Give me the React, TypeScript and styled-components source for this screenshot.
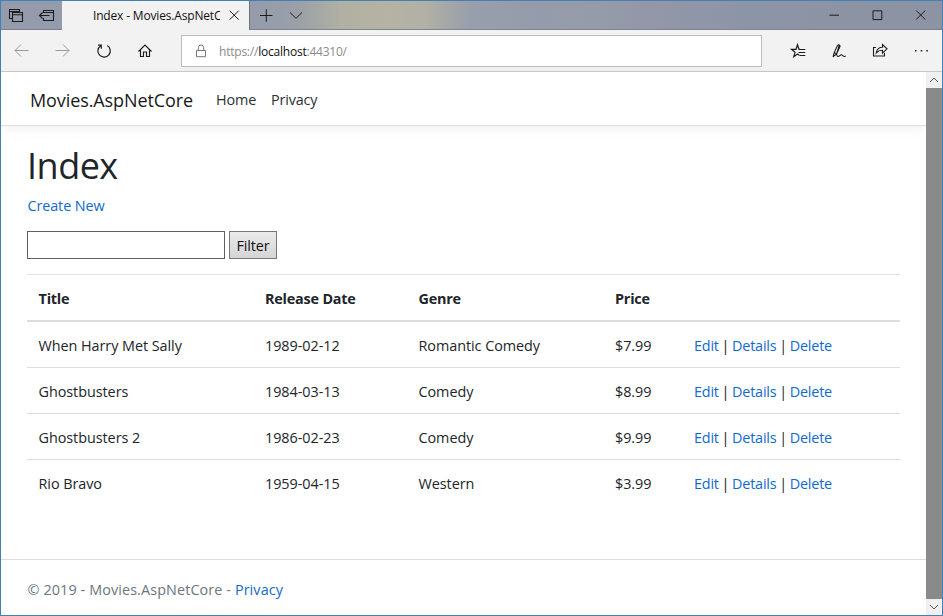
import React from "react";
import styled, { createGlobalStyle } from "styled-components";

const Global = createGlobalStyle`
  * { box-sizing: border-box; }
  html, body { margin: 0; padding: 0; }
  body { font-family: "Open Sans", "Noto Sans", sans-serif; overflow: hidden; }
`;

const Window = styled.div`
  width: 943px;
  height: 616px;
  border: 1px solid #4480b6;
  display: flex;
  flex-direction: column;
  background: #fff;
  overflow: hidden;
`;

const TitleBar = styled.header`
  display: flex;
  height: 29px;
  flex: none;
  background: linear-gradient(90deg, #949bab 0, #949bab 250px, #9a9fa8 295px, #b0b0a3 340px, #b5b4a3 385px, #b0b0a5 425px, #989eab 470px, #959baa 540px, #959ca9 590px, #9497a8 640px, #8c95a6 740px, #8c93a2 100%);
`;

const TitleCell = styled.div<{ $w: number }>`
  width: ${(p) => p.$w}px;
  flex: none;
  border-bottom: 1px solid #7b8190;
`;

const Spacer = styled.div`
  flex: 1;
  border-bottom: 1px solid #7f8491;
`;

const Tab = styled.div`
  width: 188px;
  flex: none;
  display: flex;
  background: #f2f2f2;
  border-right: 1px solid #6f7480;
`;

const TabTitle = styled.div`
  width: 127px;
  margin-left: 31px;
  overflow: hidden;
  white-space: nowrap;
  font-size: 12px;
  line-height: 29px;
  letter-spacing: -0.17px;
  color: #111;
`;

const Toolbar = styled.nav`
  height: 42px;
  flex: none;
  display: flex;
  background: #f2f2f2;
  border-bottom: 1px solid #c9c9c9;
`;

const ToolCell = styled.div<{ $w: number }>`
  width: ${(p) => p.$w}px;
  height: 41px;
  flex: none;
`;

const Address = styled.div`
  width: 581px;
  height: 32px;
  margin: 5px 21px 0 0;
  border: 1px solid #bcbcbc;
  background: #fff;
  display: flex;
  font-size: 12px;
  line-height: 31px;
  letter-spacing: -0.22px;
  color: #8b8b8b;
  white-space: pre;
  b { font-weight: 400; color: #111; }
`;

const Icon = styled.svg<{ $c?: string }>`
  display: block;
  flex: none;
  fill: none;
  stroke: ${(p) => p.$c || "#1c1c1c"};
  stroke-width: 1;
`;

const Viewport = styled.div`
  flex: 1;
  min-height: 0;
  display: flex;
`;

const Page = styled.div`
  width: 925px;
  flex: none;
  display: flex;
  flex-direction: column;
  font-size: 14.4px;
  line-height: 22px;
  color: #212529;
`;

const Navbar = styled.header`
  height: 54px;
  flex: none;
  display: flex;
  align-items: center;
  padding: 2px 0 0 29px;
  border-bottom: 1px solid #dcdee1;
  box-shadow: 0 4px 11px rgba(0, 0, 0, 0.05);
`;

const Brand = styled.a`
  width: 186px;
  font-size: 18px;
  letter-spacing: -0.1px;
  color: #191919;
  white-space: nowrap;
`;

const NavItem = styled.a<{ $w: number }>`
  width: ${(p) => p.$w}px;
  letter-spacing: -0.15px;
  color: #2b2f33;
`;

const Main = styled.main`
  width: 873px;
  margin-left: 26px;
  flex: 1;
`;

const Heading = styled.h1`
  margin: 18px 0 0;
  font-size: 36px;
  line-height: 44px;
  letter-spacing: -0.5px;
  font-weight: 400;
`;

const Link = styled.a`
  color: #1269cf;
`;

const CreateLine = styled.p`
  margin: 7px 0 0 0.5px;
  letter-spacing: -0.1px;
`;

const FilterForm = styled.form`
  display: flex;
  gap: 4px;
  margin: 14px 0 15px;
`;

const FilterInput = styled.input`
  width: 198px;
  height: 28px;
  border: 1px solid #5f6062;
  outline: none;
  background: #fff;
`;

const FilterButton = styled.button`
  width: 48px;
  height: 28px;
  padding: 2px 0 0;
  border: 1px solid #77787a;
  background: linear-gradient(#eaeaea, #d5d5d5);
  font: inherit;
  letter-spacing: -0.1px;
  color: #111;
`;

const Row = styled.div<{ $head?: boolean }>`
  display: grid;
  grid-template-columns: 226.5px 153.5px 196.5px 79px 1fr;
  height: ${(p) => (p.$head ? 48 : 46)}px;
  padding-left: 11.5px;
  line-height: ${(p) => (p.$head ? 48 : 47)}px;
  letter-spacing: ${(p) => (p.$head ? -0.2 : -0.05)}px;
  font-weight: ${(p) => (p.$head ? 700 : 400)};
  border-top: ${(p) => (p.$head ? "1px solid #dee2e6" : "0")};
  border-bottom: ${(p) => (p.$head ? "2px" : "1px")} solid #dadcdf;
  &:last-child { border-bottom: 0; }
`;

const Actions = styled.span`
  white-space: nowrap;
  letter-spacing: -0.2px;
  word-spacing: -0.75px;
`;

const Footer = styled.footer`
  height: 56px;
  flex: none;
  border-top: 1px solid #dadcdf;
  padding-left: 26.5px;
  line-height: 59px;
  letter-spacing: 0.1px;
  color: #6c757d;
`;

const Scrollbar = styled.div`
  width: 16px;
  flex: none;
  display: flex;
  flex-direction: column;
  background: #f0f0f0;
`;

const Thumb = styled.div`
  flex: 1;
  background: #8a8a8a;
`;

const movies = [
  ["When Harry Met Sally", "1989-02-12", "Romantic Comedy", "$7.99"],
  ["Ghostbusters", "1984-03-13", "Comedy", "$8.99"],
  ["Ghostbusters 2", "1986-02-23", "Comedy", "$9.99"],
  ["Rio Bravo", "1959-04-15", "Western", "$3.99"],
];

export default function App() {
  return (
    <Window>
      <Global />
      <TitleBar>
        <TitleCell $w={61}>
          <Icon width="61" height="28" viewBox="1 1 61 28">
            <path strokeWidth="1.1" d="M12.5 18.5H9.5V9.5H19.5V12M9.5 11.5H19.5M13 17.5h-.5V12.5H22.5V21.5H12.5V17M12.5 14.8h10" />
            <path strokeWidth="1.1" d="M43.5 13V10.5H53.5V20.5H43.5V18M43.5 12.5H53.5M39.5 15.5H49.5M42.5 12.5L39.5 15.5L42.5 18.5" />
          </Icon>
        </TitleCell>
        <Tab>
          <TabTitle>Index - Movies.AspNetCore</TabTitle>
          <Icon width="29" height="28" viewBox="220 1 29 28">
            <path d="M229.7 10.7l9 9M238.7 10.7l-9 9" />
          </Icon>
        </Tab>
        <TitleCell $w={65}>
          <Icon width="65" height="28" viewBox="250 1 65 28">
            <path d="M260 15.5h12.5M266.3 9.3v12.5M290 12.5l6 5.8 6-5.8" />
          </Icon>
        </TitleCell>
        <Spacer />
        <TitleCell $w={130}>
          <Icon width="130" height="28" viewBox="812 1 130 28">
            <path d="M829.5 15.2h9.5M873 10.8h8.8v8.8H873zM916.2 10.5l9 9M925.2 10.5l-9 9" />
          </Icon>
        </TitleCell>
      </TitleBar>

      <Toolbar>
        <ToolCell $w={180}>
          <Icon width="180" height="41" viewBox="1 30 180 41">
            <path stroke="#9a9a9a" d="M28.5 50.5H15M21 44.5l-6 6 6 6M55.5 50.5H69M63 44.5l6 6-6 6" />
            <path strokeWidth="1.2" d="M107.3 45.6A6.2 6.2 0 1 1 100.4 45.9M98 45.2h3.3v3.5" />
            <path strokeWidth="1.15" d="M138.5 51.5l6.5-6.5 6.5 6.5M140.5 50v6.5h3V52h3v4.5h3V50" />
          </Icon>
        </ToolCell>
        <Address>
          <Icon width="37" height="30" viewBox="182 36 37 30" $c="#777">
            <path d="M196.5 50.5h9v6.2h-9zM198.3 50.5v-2.8a2.7 2.7 0 0 1 5.4 0v2.8" />
          </Icon>
          <span>https://<b>localhost</b>:44310/</span>
        </Address>
        <ToolCell $w={159}>
          <Icon width="159" height="41" viewBox="783 30 159 41">
            <path strokeWidth="1.15" d="M800 49.3h-1l-1.5-4.6-1.5 4.6h-4.5l3.6 2.9-1.4 4.5 3.8-2.7 1.8 1.3M799.5 49.5h5.8M798.5 52.5h6.8M799.5 55.5h5.8" />
            <path strokeWidth="1.1" d="M833 56.8l1.2-4.2 3.3-7c.8-1.6 3.2-.5 2.4 1.2l-3.3 7.2L833 56.8M834.2 52.6l2.4 1.4 2.6-8.7M836.6 54c.5 2.8 1.5 3.2 3.2 1.6 1.3-1.2 2-1 3 .1 1 1 2 1 3 .2" />
            <path strokeWidth="1.1" d="M876 47.5h-2.5v8.5h11V53M876.3 52.8c.8-3.9 3-5.5 6.2-5.5v-2.8l4.5 4.3-4.5 4.3v-2.8c-2.5 0-4.4.5-6.2 2.5z" />
            <path strokeWidth="1.5" d="M915 50.8h1.5M920.7 50.8h1.5M926.3 50.8h1.5" />
          </Icon>
        </ToolCell>
      </Toolbar>

      <Viewport>
        <Page>
          <Navbar>
            <Brand>Movies.AspNetCore</Brand>
            <NavItem $w={55}>Home</NavItem>
            <NavItem $w={60}>Privacy</NavItem>
          </Navbar>
          <Main>
            <Heading>Index</Heading>
            <CreateLine><Link>Create New</Link></CreateLine>
            <FilterForm onSubmit={(e) => e.preventDefault()}>
              <FilterInput aria-label="Filter" />
              <FilterButton>Filter</FilterButton>
            </FilterForm>
            <div>
              <Row $head>
                <span>Title</span>
                <span>Release Date</span>
                <span>Genre</span>
                <span>Price</span>
              </Row>
              {movies.map((m) => (
                <Row key={m[0]}>
                  {m.map((cell) => <span key={cell}>{cell}</span>)}
                  <Actions>
                    <Link>Edit</Link> | <Link>Details</Link> | <Link>Delete</Link>
                  </Actions>
                </Row>
              ))}
            </div>
          </Main>
          <Footer>© 2019 - Movies.AspNetCore - <Link>Privacy</Link></Footer>
        </Page>
        <Scrollbar>
          <Icon width="16" height="16" viewBox="0 0 16 16" $c="#555"><path d="M4 10l4-4 4 4" /></Icon>
          <Thumb />
          <Icon width="16" height="16" viewBox="0 0 16 16" $c="#555"><path d="M4 6l4 4 4-4" /></Icon>
        </Scrollbar>
      </Viewport>
    </Window>
  );
}
